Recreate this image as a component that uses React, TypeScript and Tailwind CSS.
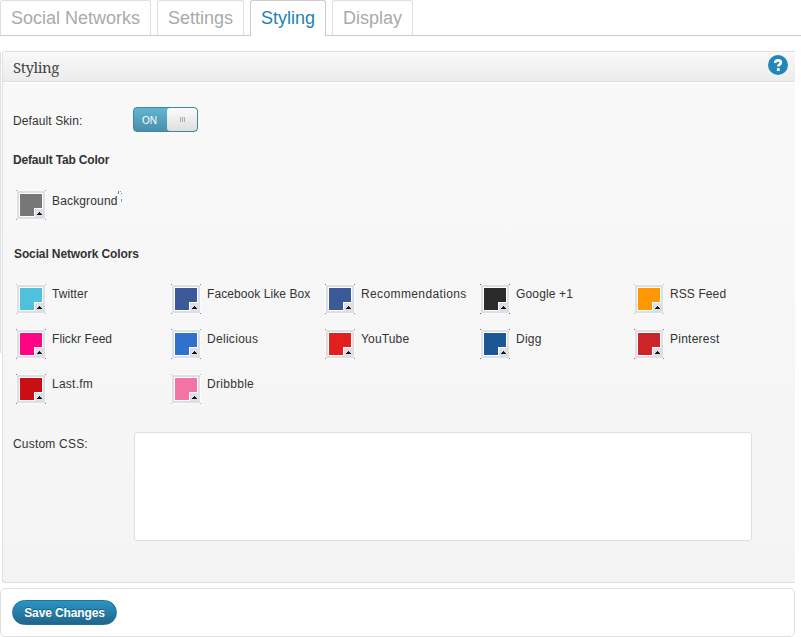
import React from "react";

type Network = { name: string; color: string; tracking: string };

const networks: Network[] = [
  { name: "Twitter", color: "#4fc1dc", tracking: "tracking-[0.05px]" },
  { name: "Facebook Like Box", color: "#3b5998", tracking: "tracking-[0.08px]" },
  { name: "Recommendations", color: "#3b5998", tracking: "tracking-[0.38px]" },
  { name: "Google +1", color: "#2b2b2b", tracking: "tracking-[0.15px]" },
  { name: "RSS Feed", color: "#ff9800", tracking: "tracking-[0.1px]" },
  { name: "Flickr Feed", color: "#ff0585", tracking: "tracking-[0.07px]" },
  { name: "Delicious", color: "#3271cb", tracking: "tracking-[0.3px]" },
  { name: "YouTube", color: "#e1201f", tracking: "tracking-[0.15px]" },
  { name: "Digg", color: "#1b5795", tracking: "tracking-[0.25px]" },
  { name: "Pinterest", color: "#cb2529", tracking: "tracking-[0.25px]" },
  { name: "Last.fm", color: "#c90f13", tracking: "tracking-[0.25px]" },
  { name: "Dribbble", color: "#f373a7", tracking: "tracking-[0.3px]" },
];

function Swatch({ color }: { color: string }) {
  return (
    <svg width="30" height="30" viewBox="0 0 30 30" shapeRendering="crispEdges" className="block shrink-0">
      <rect width="30" height="30" fill="#fbfbfc" />
      <path d="M0 0h1v1H0zM29 0h1v1h-1zM0 29h1v1H0zM29 29h1v1h-1z" fill={color} opacity="0.75" />
      <rect x="1" y="1" width="28" height="28" fill="#dcdfe3" />
      <rect x="3" y="3" width="24" height="24" fill="#fff" />
      <path d="M4 4h22v14h-8v8H4z" fill={color} />
      <path d="M19 19h8v8h-8z" fill="#dcdfe3" />
      <path d="M23 22h1v1h1v1h1v1h-5v-1h1v-1h1z" fill="#15171c" />
    </svg>
  );
}

function ColorItem({ name, color, tracking }: Network) {
  return (
    <div className="flex h-[30px] items-start gap-1.5">
      <Swatch color={color} />
      <span className={`mt-[3px] text-[12px] leading-[14px] whitespace-nowrap ${tracking}`}>{name}</span>
    </div>
  );
}

const tab = "h-[35px] shrink-0 rounded-t-[3px] border border-b-0 border-[#dfdfdf] pl-[10px] pt-[6px] text-[18px] leading-[22px] whitespace-nowrap text-[#aaa]";

export default function App() {
  return (
    <div className="h-[637px] w-[801px] overflow-hidden bg-white font-['Liberation_Sans',Arial,sans-serif] text-[#333]">
      <nav className="flex h-9 gap-1.5 border-b border-[#ccc]">
        <div className={`${tab} w-[151px]`}>Social Networks</div>
        <div className={`${tab} w-[87px]`}>Settings</div>
        <div className="h-9 w-[76px] shrink-0 rounded-t-[3px] border border-b-0 border-[#ccc] bg-white pt-[6px] pl-[10px] text-[18px] leading-[22px] text-[#2183b4]">Styling</div>
        <div className={`${tab} w-[81px]`}>Display</div>
      </nav>

      <div className="mt-[15px] flex w-[795px]">
        <div className="mt-px mr-px h-[301px] w-px bg-[#dfdfdf]" />
        <section className="h-[532px] flex-1 rounded-l-[3px] border border-r-0 border-[#dfdfdf] bg-linear-to-b from-[#f9f9f9] to-[#f4f4f4]">
          <header className="flex h-[30px] items-center justify-between border-b border-[#dfdfdf] bg-linear-to-b from-[#f9f9f9] to-[#ececec] pr-[7px] pl-[10px] shadow-[0_1px_0_#fff]">
            <h1 className="mt-px font-['Noto_Serif','Liberation_Serif',Georgia,serif] text-[15px] leading-5 tracking-[-0.45px] text-[#464646]">Styling</h1>
            <svg width="20" height="20" viewBox="0 0 20 20" className="-mt-[3px]">
              <circle cx="10" cy="10" r="10" fill="#2486b5" />
              <path d="M7.2 8C7.2 6.2 8.3 5.4 10.1 5.4s2.8.9 2.8 2.3c0 1.7-2.6 1.7-2.6 3.8" fill="none" stroke="#fff" strokeWidth="2.6" />
              <rect x="8.9" y="13.2" width="2.8" height="2.8" fill="#fff" />
            </svg>
          </header>

          <div className="mt-[25px] ml-[10px] flex h-[25px]">
            <span className="w-[120px] pt-[7px] text-[12px] leading-[14px] tracking-[0.1px]">Default Skin:</span>
            <div className="flex h-[25px] w-[65px] overflow-hidden rounded-[4px] border border-[#3f86a1] bg-linear-to-b from-[#61b5d2] to-[#4c8fa9]">
              <span className="w-[33px] pt-[7px] pl-2 text-[10px] leading-3 text-white">ON</span>
              <div className="flex h-[23px] w-[30px] items-start justify-center gap-px rounded-[3px] bg-linear-to-b from-[#fcfcfc] to-[#dedede] pt-[9px]">
                <i className="h-[5px] w-px bg-[#aaa]" />
                <i className="h-[5px] w-px bg-[#aaa]" />
                <i className="h-[5px] w-px bg-[#aaa]" />
              </div>
            </div>
          </div>

          <h2 className="mt-[21px] ml-[10px] text-[12px] leading-[14px] font-bold tracking-[-0.17px]">Default Tab Color</h2>
          <div className="mt-[23px] ml-[13px] flex h-[30px] gap-1.5">
            <Swatch color="#777777" />
            <div className="flex">
              <span className="mt-1 text-[12px] leading-[14px] tracking-[0.15px]">Background</span>
              <svg width="5" height="14" viewBox="0 0 5 14" shapeRendering="crispEdges">
                <path d="M0 1h1v3H0zM3 3h1v1H3z" fill="#777" />
                <path d="M2 1h1v1H2zM3 9h1v3H3z" fill="#999" />
              </svg>
            </div>
          </div>

          <h2 className="mt-[27px] ml-[11px] text-[12px] leading-[14px] font-bold tracking-[-0.12px]">Social Network Colors</h2>
          <div className="mt-[23px] ml-[13px] grid grid-cols-[155px_154px_155px_154px_150px] gap-y-[15px]">
            {networks.map((n) => (
              <ColorItem key={n.name} {...n} />
            ))}
          </div>

          <div className="mt-[28px] ml-[10px] flex">
            <span className="w-[121px] pt-[5px] text-[12px] leading-[14px] tracking-[0.2px]">Custom CSS:</span>
            <textarea className="block h-[109px] w-[618px] resize-none rounded-[3px] border border-[#dfdfdf] bg-white" />
          </div>
        </section>
      </div>

      <footer className="mt-[5px] h-[49px] w-[795px] rounded-[5px] border border-[#dfdfdf] bg-white pt-[11px] pl-[11px]">
        <button className="block h-[25px] w-[105px] rounded-full border border-[#21759b] bg-linear-to-b from-[#2a95c5] to-[#21658a] pt-px text-[12px] leading-[23px] font-bold tracking-[-0.12px] whitespace-nowrap text-white [text-shadow:0_-1px_0_rgba(0,0,0,0.3)]">
          Save Changes
        </button>
      </footer>
    </div>
  );
}
